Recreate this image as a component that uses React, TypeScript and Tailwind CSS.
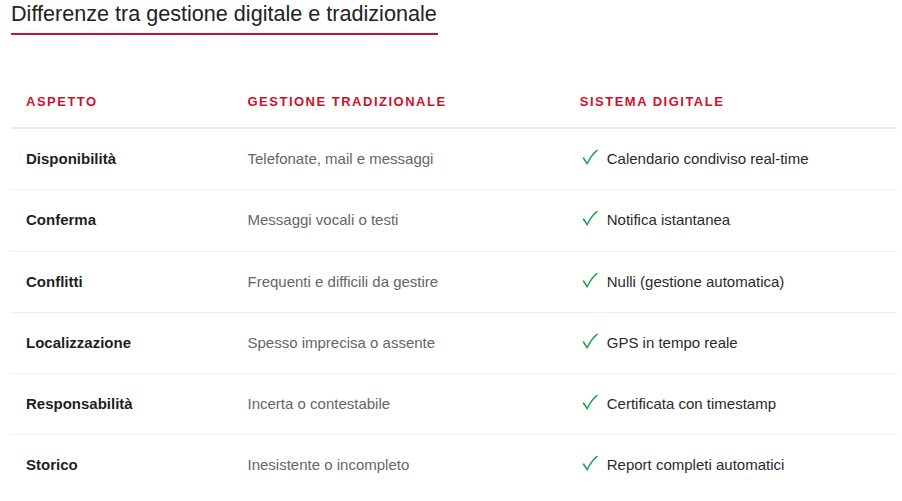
import React from "react";

const rows = [
  ["Disponibilità", "Telefonate, mail e messaggi", "Calendario condiviso real-time"],
  ["Conferma", "Messaggi vocali o testi", "Notifica istantanea"],
  ["Conflitti", "Frequenti e difficili da gestire", "Nulli (gestione automatica)"],
  ["Localizzazione", "Spesso imprecisa o assente", "GPS in tempo reale"],
  ["Responsabilità", "Incerta o contestabile", "Certificata con timestamp"],
  ["Storico", "Inesistente o incompleto", "Report completi automatici"],
];

function Check() {
  return (
    <svg
      width="16"
      height="16"
      viewBox="0 0 16 16"
      className="shrink-0 ml-[2px] mr-[9px] -translate-y-[2px]"
      fill="none"
    >
      <path
        d="M1.6 9.2 L5.2 14.6"
        stroke="#22a04f"
        strokeWidth="1.7"
        strokeLinecap="round"
      />
      <path
        d="M5.2 14.6 C7.6 9.6 10.6 5.2 15 1.4"
        stroke="#22a04f"
        strokeWidth="1.4"
        strokeLinecap="round"
      />
    </svg>
  );
}

export default function App() {
  return (
    <div
      className="w-[902px] h-[501px] overflow-hidden bg-white pl-[11px] pr-[5px]"
      style={{ fontFamily: '"Liberation Sans", Arial, sans-serif' }}
    >
      <h2 className="inline-block text-[21.6px] leading-[25px] pt-[1px] pb-[7px] pr-[1px] font-normal text-[#222] border-b-2 border-[#d0102a]">
        Differenze tra gestione digitale e tradizionale
      </h2>
      <div className="mt-[38px]">
        <div className="grid grid-cols-[1fr_1.5fr_1.5fr] border-b-2 border-[#ececec]">
          {["Aspetto", "Gestione Tradizionale", "Sistema Digitale"].map((h) => (
            <div
              key={h}
              className="px-[15px] pt-[21px] pb-[17px] text-[13px] leading-4 font-bold uppercase tracking-[1.5px] text-[#d0102a]"
            >
              {h}
            </div>
          ))}
        </div>
        {rows.map((r, i) => (
          <div
            key={r[0]}
            className={
              "grid grid-cols-[1fr_1.5fr_1.5fr] " +
              (i < rows.length - 1 ? "border-b border-[#eeeeee]" : "")
            }
          >
            <div className="px-[15px] py-5 text-[15px] leading-[20.25px] font-bold text-[#1f1f1f]">{r[0]}</div>
            <div className="px-[15px] py-5 text-[15px] leading-[20.25px] text-[#666666]">{r[1]}</div>
            <div className="px-[15px] py-5 text-[15px] leading-[20.25px] text-[#2a2a2a] flex items-center">
              <Check />
              <span>{r[2]}</span>
            </div>
          </div>
        ))}
      </div>
    </div>
  );
}
